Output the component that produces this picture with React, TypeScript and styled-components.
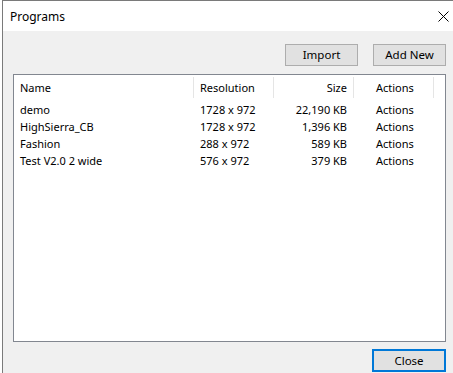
import React from 'react';
import styled, { createGlobalStyle } from 'styled-components';

interface Program {
  name: string;
  resolution: string;
  size: string;
}

const programs: Program[] = [
  { name: 'demo', resolution: '1728 x 972', size: '22,190 KB' },
  { name: 'HighSierra_CB', resolution: '1728 x 972', size: '1,396 KB' },
  { name: 'Fashion', resolution: '288 x 972', size: '589 KB' },
  { name: 'Test V2.0 2 wide', resolution: '576 x 972', size: '379 KB' },
];

const GlobalStyle = createGlobalStyle`
  html, body {
    margin: 0;
    padding: 0;
    background: #ffffff;
  }
  body {
    font-family: "Noto Sans", "Open Sans", sans-serif;
    font-size: 11px;
    color: #000;
  }
`;

const Window = styled.div`
  margin-left: 2px;
  width: 451px;
  height: 372px;
  border-top: 1px solid #7a7a7a;
  border-left: 1px solid #7a7a7a;
  display: flex;
  flex-direction: column;
  overflow: hidden;
`;

const TitleBar = styled.div`
  height: 30px;
  flex: none;
  background: #ffffff;
  display: flex;
  align-items: center;
  justify-content: space-between;
  padding-left: 7px;
  padding-right: 5px;
`;

const Title = styled.div`
  font-size: 12px;
  color: #000;
`;

const CloseGlyph = styled.div`
  width: 12px;
  height: 12px;
  display: flex;
  align-items: center;
  justify-content: center;
`;

const Body = styled.div`
  flex: 1;
  background: #f0f0f0;
  display: flex;
  flex-direction: column;
  padding: 13px 8px 0 10px;
`;

const Toolbar = styled.div`
  display: flex;
  justify-content: flex-end;
  gap: 15px;
  height: 22px;
  margin-bottom: 8px;
`;

const Button = styled.button<{ $default?: boolean }>`
  width: ${({ $default }) => ($default ? '74px' : '73px')};
  height: ${({ $default }) => ($default ? '23px' : '22px')};
  box-sizing: border-box;
  background: #e1e1e1;
  border: ${({ $default }) => ($default ? '2px solid #0078d7' : '1px solid #adadad')};
  border-radius: 0;
  font-family: "Noto Sans", "Open Sans", sans-serif;
  font-size: 11.5px;
  color: #000;
  padding: 0;
  line-height: 1;
`;

const List = styled.div`
  height: 268px;
  box-sizing: border-box;
  background: #ffffff;
  border: 1px solid #828790;
  display: flex;
  flex-direction: column;
`;

const HeaderRow = styled.div`
  display: grid;
  grid-template-columns: 180px 80px 80px 80px;
  height: 26px;
  align-items: stretch;
`;

const HeaderCell = styled.div<{ $align?: 'left' | 'right'; $pad: number }>`
  display: flex;
  align-items: center;
  justify-content: ${({ $align }) => ($align === 'right' ? 'flex-end' : 'flex-start')};
  padding-left: ${({ $align, $pad }) => ($align === 'right' ? 0 : $pad)}px;
  padding-right: ${({ $align, $pad }) => ($align === 'right' ? $pad : 0)}px;
  border-right: 1px solid #e5e5e5;
  margin: 2px 0 3px;
`;

const Row = styled.div`
  display: grid;
  grid-template-columns: 180px 80px 80px 80px;
  height: 17px;
  align-items: center;
`;

const Cell = styled.div<{ $align?: 'left' | 'right'; $pad: number }>`
  text-align: ${({ $align }) => ($align === 'right' ? 'right' : 'left')};
  padding-left: ${({ $align, $pad }) => ($align === 'right' ? 0 : $pad)}px;
  padding-right: ${({ $align, $pad }) => ($align === 'right' ? $pad + 1 : 0)}px;
  white-space: nowrap;
`;

const Footer = styled.div`
  display: flex;
  justify-content: flex-end;
  margin-top: 7px;
`;

const columns = [
  { key: 'name', label: 'Name', pad: 6 },
  { key: 'resolution', label: 'Resolution', pad: 6 },
  { key: 'size', label: 'Size', pad: 6, align: 'right' as const },
  { key: 'actions', label: 'Actions', pad: 22 },
];

const App: React.FC = () => (
  <>
    <GlobalStyle />
    <Window>
      <TitleBar>
        <Title>Programs</Title>
        <CloseGlyph>
          <svg width="11" height="11" viewBox="0 0 11 11">
            <path d="M0.5 0.5 L10.5 10.5 M10.5 0.5 L0.5 10.5" stroke="#000" strokeWidth="1" />
          </svg>
        </CloseGlyph>
      </TitleBar>
      <Body>
        <Toolbar>
          <Button>Import</Button>
          <Button>Add New</Button>
        </Toolbar>
        <List>
          <HeaderRow>
            {columns.map(c => (
              <HeaderCell key={c.key} $pad={c.pad} $align={c.align}>
                {c.label}
              </HeaderCell>
            ))}
          </HeaderRow>
          {programs.map(p => (
            <Row key={p.name}>
              <Cell $pad={6}>{p.name}</Cell>
              <Cell $pad={6}>{p.resolution}</Cell>
              <Cell $pad={6} $align="right">{p.size}</Cell>
              <Cell $pad={22}>Actions</Cell>
            </Row>
          ))}
        </List>
        <Footer>
          <Button $default>Close</Button>
        </Footer>
      </Body>
    </Window>
  </>
);

export default App;
